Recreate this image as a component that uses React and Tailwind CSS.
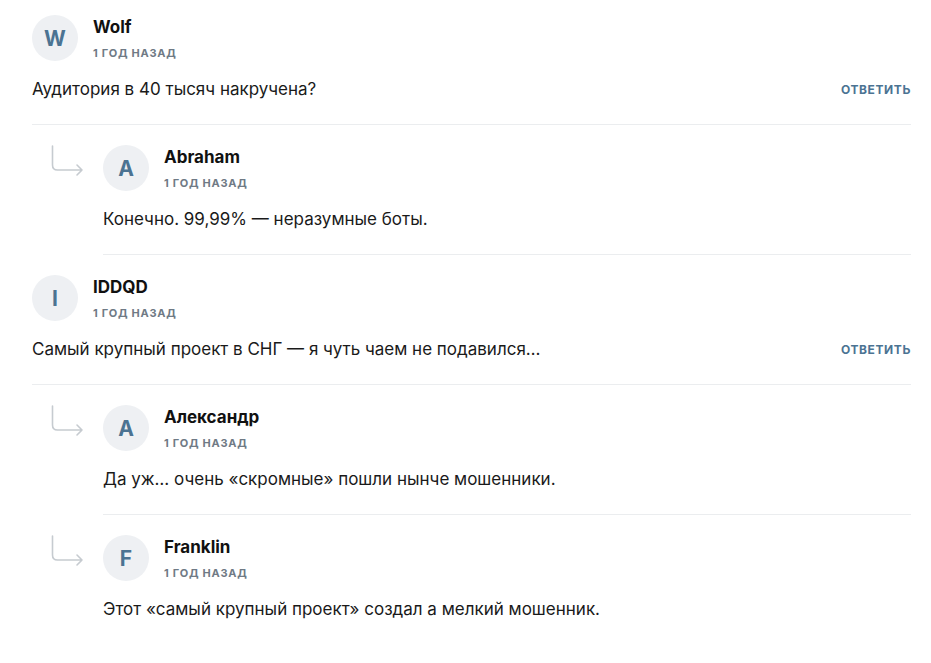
import React from "react";

function ReplyArrow() {
  return (
    <svg width="34" height="34" viewBox="0 0 34 34" fill="none" className="shrink-0">
      <path
        d="M2.5 1 V20 Q2.5 25 7.5 25 H32 M27 20 L32 25 L27 30"
        stroke="#c6cbd0"
        strokeWidth="1.6"
        strokeLinecap="round"
        strokeLinejoin="round"
      />
    </svg>
  );
}

function Avatar({ letter }) {
  return (
    <div className="w-[46px] h-[46px] rounded-full bg-[#eef0f3] flex items-center justify-center shrink-0 text-[#4b7392] text-[21px] font-bold leading-none">
      {letter}
    </div>
  );
}

function Comment({ name, text, reply, last, answer }) {
  return (
    <div className={reply ? "flex pl-[18px]" : "flex"}>
      {reply && (
        <div className="w-[53px] shrink-0 pt-[20px]">
          <ReplyArrow />
        </div>
      )}
      <div className={"flex-1 pt-5 pb-[23px] " + (last ? "" : "border-b border-[#ebedef]")}>
        <div className="flex items-start gap-[15px] h-[46px]">
          <Avatar letter={name[0]} />
          <div className="flex flex-col">
            <div className="text-[17px] leading-[22px] font-bold text-[#111] pt-[1px]">{name}</div>
            <div className="mt-[7px] text-[11px] leading-[16px] font-bold tracking-[0.75px] text-[#6f7a85] uppercase">
              1 год назад
            </div>
          </div>
        </div>
        <div className="mt-[16px] flex items-center justify-between">
          <div className="text-[17px] leading-6 text-[#1a1a1a]">{text}</div>
          {answer && (
            <div className="text-[12px] font-bold tracking-[0.6px] text-[#4b7392] uppercase pt-[2px]">
              Ответить
            </div>
          )}
        </div>
      </div>
    </div>
  );
}

export default function App() {
  return (
    <div
      className="bg-white min-h-[663px] pl-8 pr-[20px]"
      style={{ fontFamily: "Inter, Roboto, 'Liberation Sans', sans-serif" }}
    >
      <div className="-mt-[5px]">
        <Comment name="Wolf" text="Аудитория в 40 тысяч накручена?" answer />
        <Comment name="Abraham" text="Конечно. 99,99% — неразумные боты." reply />
        <Comment name="IDDQD" text="Самый крупный проект в СНГ — я чуть чаем не подавился…" answer />
        <Comment name="Александр" text="Да уж… очень «скромные» пошли нынче мошенники." reply />
        <Comment name="Franklin" text="Этот «самый крупный проект» создал а мелкий мошенник." reply last />
      </div>
    </div>
  );
}
